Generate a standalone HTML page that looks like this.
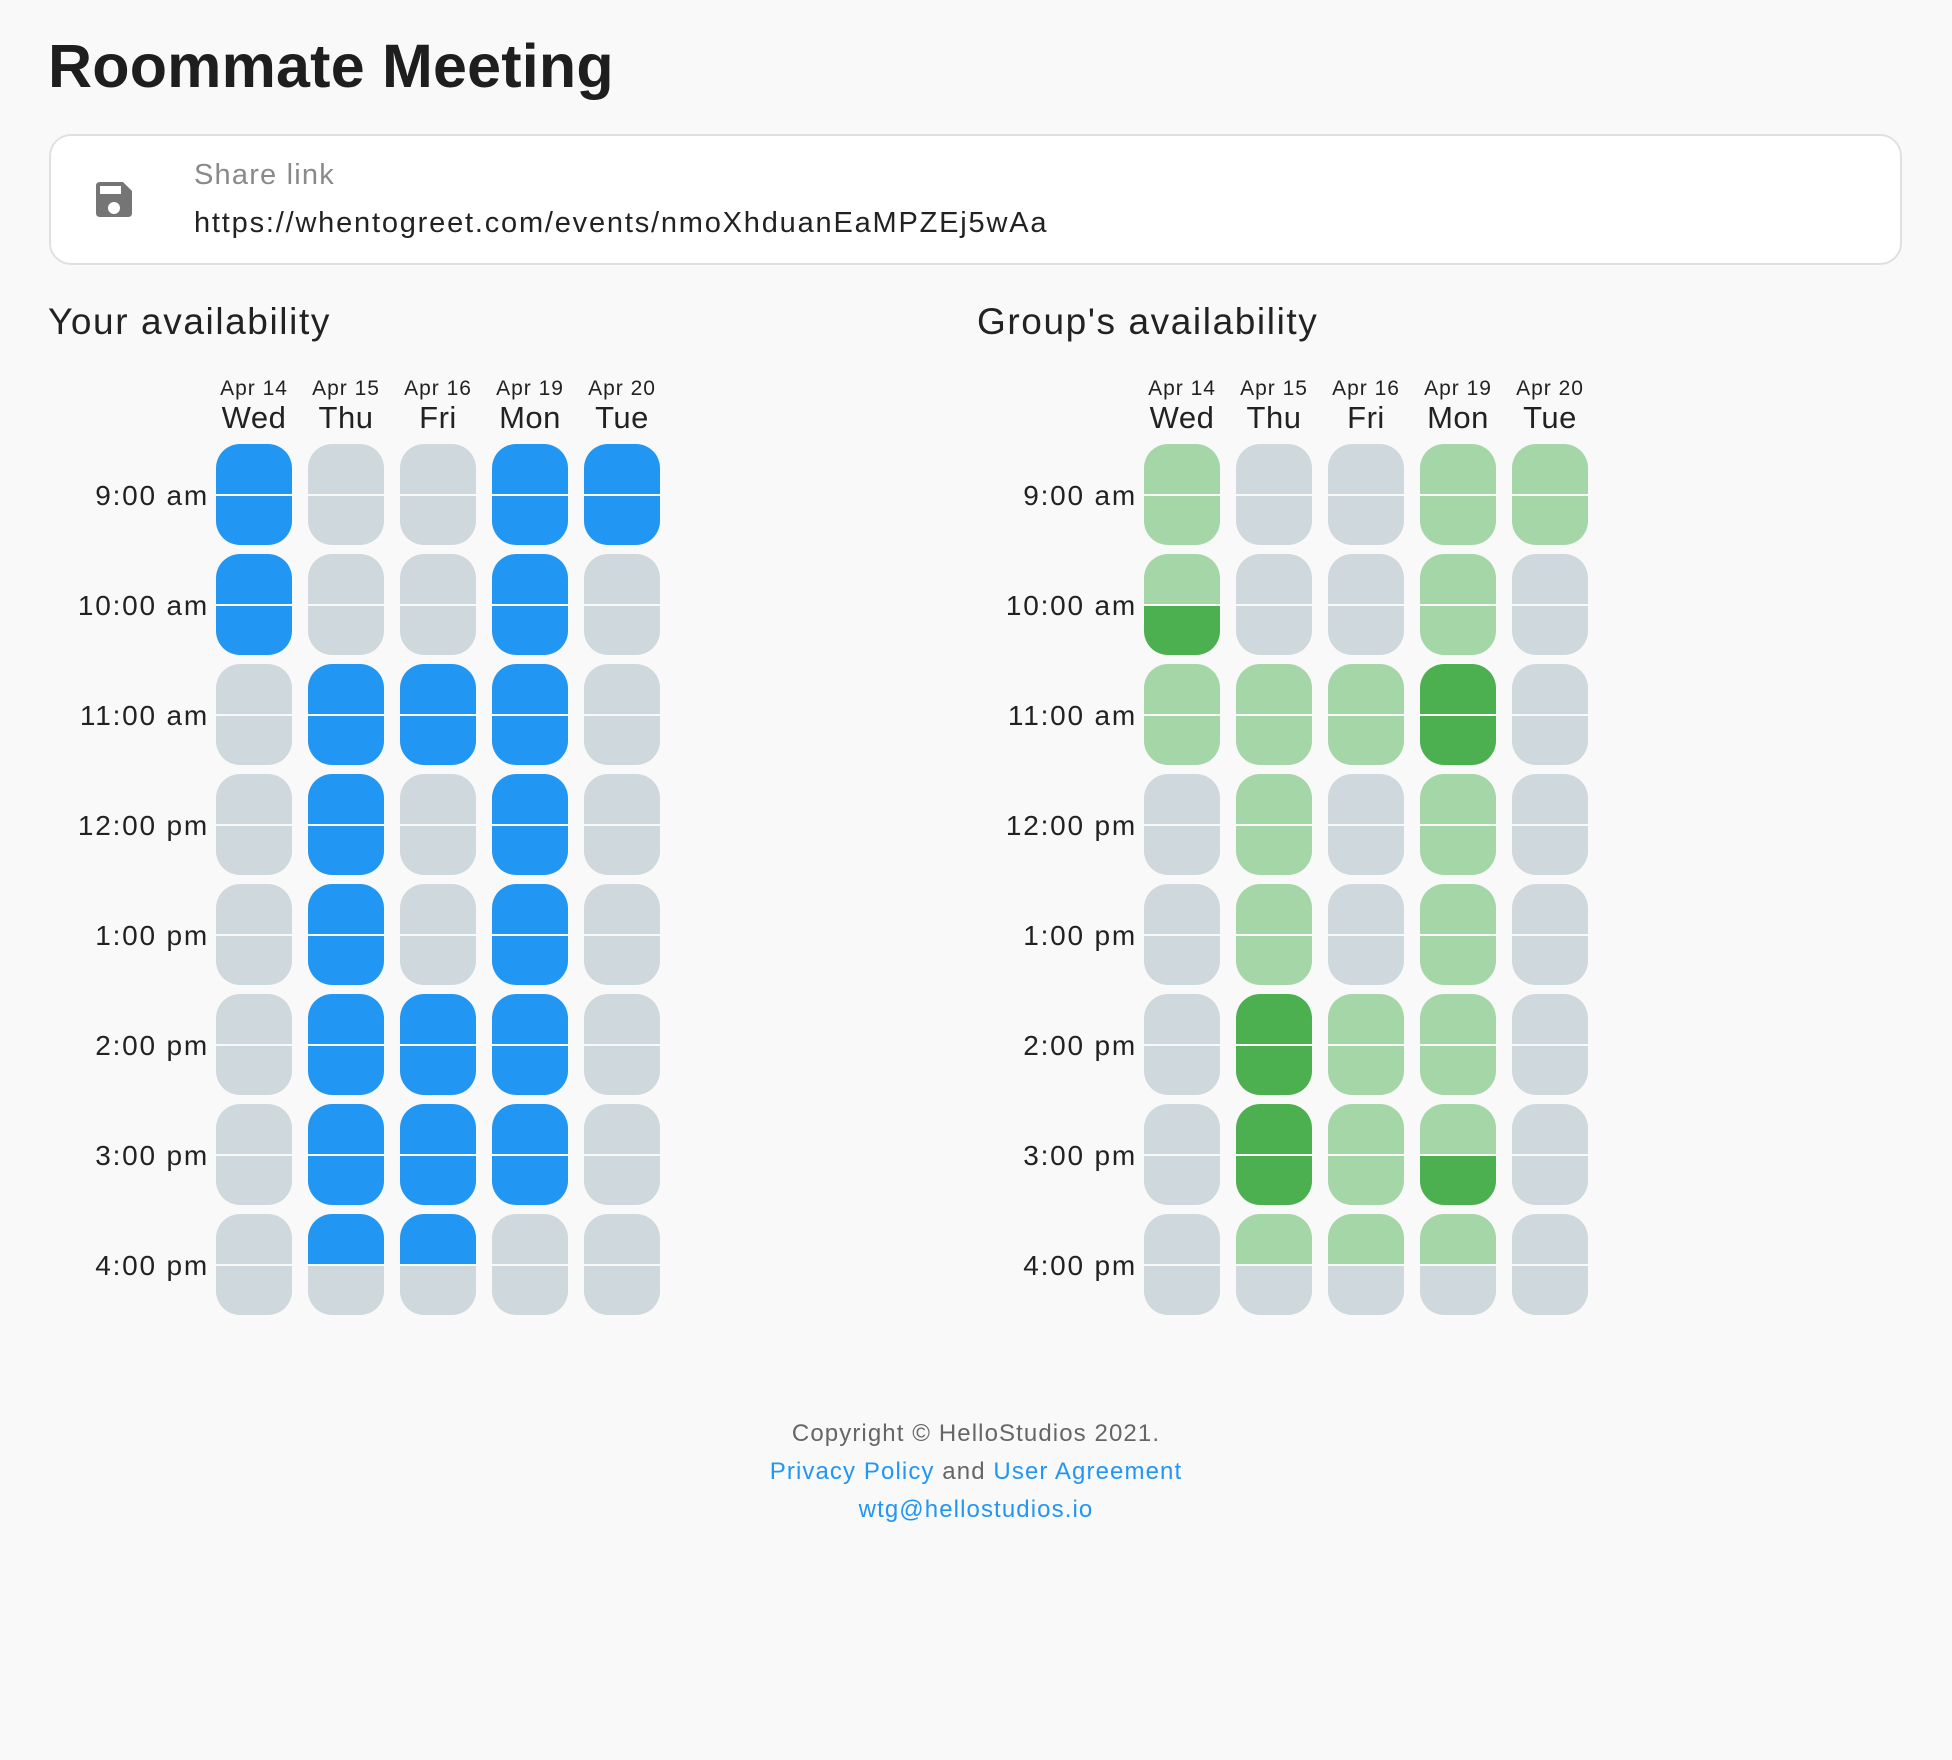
<!DOCTYPE html>
<html><head><meta charset="utf-8"><style>
html,body{margin:0;padding:0;}
body{width:1952px;height:1760px;background:#f9f9f9;position:relative;font-family:"Liberation Sans",sans-serif;color:#222;overflow:hidden;}
.abs{position:absolute;}
h1{position:absolute;left:48px;top:31px;margin:0;font-size:61px;font-weight:bold;color:#1e1e1e;letter-spacing:0.2px;}
.card{position:absolute;left:49px;top:134px;width:1853px;height:131px;border:2px solid #e0e0e0;border-radius:22px;background:#fff;box-sizing:border-box;}
.sl{position:absolute;left:194px;top:159px;font-size:29px;color:#8a8a8a;letter-spacing:1.2px;}
.url{position:absolute;left:194px;top:207px;font-size:29px;color:#222;letter-spacing:1.8px;}
h2{position:absolute;margin:0;font-size:37px;font-weight:normal;color:#222;top:301px;letter-spacing:1.6px;}
.c{position:absolute;width:76px;height:101px;border-radius:24px;overflow:hidden;display:flex;flex-direction:column;}
.c i{display:block;height:49.5px;}
.c i+i{margin-top:2px;}
.b{background:#2196f3}.g{background:#cfd8dc}.l{background:#a5d6a7}.d{background:#4caf50}
.hd{position:absolute;width:92px;text-align:center;}
.hd .a{font-size:21px;line-height:24px;display:block;letter-spacing:1px;margin-top:3px;}
.hd .w{font-size:31px;line-height:34px;display:block;letter-spacing:0.5px;}
.t{position:absolute;width:220px;text-align:right;font-size:28px;line-height:34px;letter-spacing:1.8px;}
.foot{position:absolute;left:0;width:1952px;text-align:center;font-size:24px;color:#666;line-height:38px;top:1415px;letter-spacing:1.1px;}
.foot a{color:#2196f3;text-decoration:none;}
</style></head><body>
<h1>Roommate Meeting</h1>
<div class="card"></div>
<svg class="abs" style="left:96px;top:182px" width="36" height="35" viewBox="0 0 36 35">
<path d="M4 0H27L36 9V31Q36 35 32 35H4Q0 35 0 31V4Q0 0 4 0Z" fill="#757575"/>
<rect x="4" y="4" width="21" height="8" fill="#fff"/>
<circle cx="18" cy="26" r="6" fill="#fff"/>
</svg>
<div class="sl">Share link</div>
<div class="url">https://whentogreet.com/events/nmoXhduanEaMPZEj5wAa</div>

<h2 style="left:48px">Your availability</h2>
<h2 style="left:977px">Group's availability</h2>

<div id="L"></div>
<div id="R"></div>

<div class="foot">Copyright © HelloStudios 2021.<br><a>Privacy Policy</a> and <a>User Agreement</a><br><a>wtg@hellostudios.io</a></div>

<script>
var dates=[["Apr 14","Wed"],["Apr 15","Thu"],["Apr 16","Fri"],["Apr 19","Mon"],["Apr 20","Tue"]];
var times=["9:00 am","10:00 am","11:00 am","12:00 pm","1:00 pm","2:00 pm","3:00 pm","4:00 pm"];
var left=[
"bb gg gg bb bb",
"bb gg gg bb gg",
"gg bb bb bb gg",
"gg bb gg bb gg",
"gg bb gg bb gg",
"gg bb bb bb gg",
"gg bb bb bb gg",
"gg bg bg gg gg"];
var right=[
"ll gg gg ll ll",
"ld gg gg ll gg",
"ll ll ll dd gg",
"gg ll gg ll gg",
"gg ll gg ll gg",
"gg dd ll ll gg",
"gg dd ll ld gg",
"gg lg lg lg gg"];
function build(x0,labelRight,data){
  var h="";
  for(var j=0;j<5;j++){
    h+='<div class="hd" style="left:'+(x0+92*j-8)+'px;top:374px"><span class="a">'+dates[j][0]+'</span><span class="w">'+dates[j][1]+'</span></div>';
  }
  for(var r=0;r<8;r++){
    var y=444+110*r;
    h+='<div class="t" style="left:'+(labelRight-220)+'px;top:'+(y+35)+'px">'+times[r]+'</div>';
    var cells=data[r].split(" ");
    for(var j=0;j<5;j++){
      h+='<div class="c" style="left:'+(x0+92*j)+'px;top:'+y+'px"><i class="'+cells[j][0]+'"></i><i class="'+cells[j][1]+'"></i></div>';
    }
  }
  return h;
}
document.getElementById("L").innerHTML=build(216,209,left);
document.getElementById("R").innerHTML=build(1144,1137,right);
</script>
</body></html>
